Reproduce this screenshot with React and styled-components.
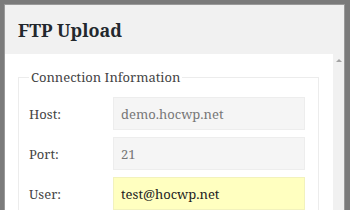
import React from "react";
import styled, { createGlobalStyle } from "styled-components";

const Global = createGlobalStyle`
  html, body {
    margin: 0;
    padding: 0;
    background: #7b7b7b;
    height: 210px;
    overflow: hidden;
  }
  * { box-sizing: border-box; }
`;

const Page = styled.div`
  padding: 4px 5px 0 4px;
  height: 210px;
  font-family: "Noto Serif", "DejaVu Serif", serif;
`;

const Modal = styled.div`
  background: #f1f1f1;
  border: 1px solid #9a9a9a;
  border-bottom: none;
  height: 206px;
  display: flex;
  flex-direction: column;
  overflow: hidden;
`;

const Header = styled.div`
  flex-shrink: 0;
  height: 49px;
  padding: 0 0 0 13px;
  display: flex;
  align-items: center;
  font-size: 18px;
  font-weight: bold;
  color: #23282d;
`;

const BodyRow = styled.div`
  flex: 1;
  display: flex;
  min-height: 0;
`;

const Content = styled.div`
  flex: 1;
  background: #fff;
  padding: 14px 14px 0 13px;
`;

const Scrollbar = styled.div`
  width: 11px;
  background: #f1f1f1;
  display: flex;
  justify-content: center;
  padding-top: 5px;
`;

const Arrow = styled.div`
  width: 0;
  height: 0;
  border-left: 3px solid transparent;
  border-right: 3px solid transparent;
  border-bottom: 3px solid #a3a3a3;
`;

const Fieldset = styled.fieldset`
  margin: 0;
  border: 1px solid #ececec;
  padding: 11px 13px 10px 10px;
`;

const Legend = styled.legend`
  padding: 0 2px;
  margin-left: 0;
  font-size: 13px;
  color: #444;
`;

const Row = styled.div`
  display: flex;
  align-items: center;
  margin-bottom: 7px;
`;

const Label = styled.label`
  width: 84px;
  font-size: 13px;
  color: #444;
`;

const Input = styled.input`
  width: 192px;
  height: 33px;
  padding: 0 7px;
  font-family: inherit;
  font-size: 13px;
  color: ${(p) => (p.readOnly ? "#777" : "#222")};
  background: ${(p) => (p.$highlight ? "#ffffc0" : "#f5f5f5")};
  border: 1px solid ${(p) => (p.$highlight ? "#f2f2bd" : "#ededed")};
  outline: none;
`;

export default function App() {
  return (
    <Page>
      <Global />
      <Modal>
        <Header>FTP Upload</Header>
        <BodyRow>
          <Content>
            <Fieldset>
              <Legend>Connection Information</Legend>
              <Row>
                <Label>Host:</Label>
                <Input readOnly value="demo.hocwp.net" />
              </Row>
              <Row>
                <Label>Port:</Label>
                <Input readOnly value="21" />
              </Row>
              <Row>
                <Label>User:</Label>
                <Input $highlight defaultValue="test@hocwp.net" />
              </Row>
            </Fieldset>
          </Content>
          <Scrollbar>
            <Arrow />
          </Scrollbar>
        </BodyRow>
      </Modal>
    </Page>
  );
}
